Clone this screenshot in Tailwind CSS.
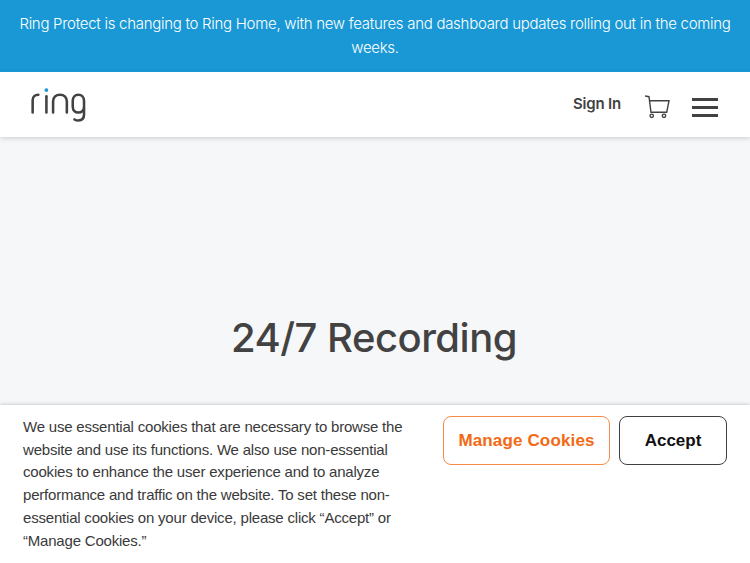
<!DOCTYPE html>
<html><head><meta charset="utf-8"><script src="https://cdn.jsdelivr.net/npm/@tailwindcss/browser@4"></script></head>
<body class="relative w-[750px] h-[563px] overflow-hidden bg-[#f6f7f9] font-['Inter',sans-serif]">
<div class="bg-[#1998d5] border-b border-b-[#1aa0e0] h-[72px] px-[15px] pt-[12px] text-center text-white text-[15px] font-light tracking-[-0.28px] leading-[24px]">Ring Protect is changing to Ring Home, with new features and dashboard updates rolling out in the coming weeks.</div>
<header class="bg-white h-[65px] flex items-center pl-[30px] pr-[32px] shadow-[0_1px_5px_rgba(0,0,0,0.18)] relative">
<svg width="56" height="36" viewBox="0 0 57 36" class="mt-[3px]" fill="none" stroke="#424242" stroke-width="2.6" stroke-linecap="round">
<path d="M2.700 24.700V12C2.700 8.500 5 6.500 8.500 6.500"/><path d="M16.700 8V24.700"/><circle cx="16.700" cy="1.800" r="1.900" fill="#1998d5" stroke="none"/><path d="M23.500 24.700V13.500C23.500 9 26.500 6.500 30.500 6.500S37.500 9 37.500 13.500V24.700"/><path d="M55 13C55 9 52.500 6.500 49.200 6.500S43.500 9 43.500 13V18.500C43.500 22.500 46 24.700 49.200 24.700S55 22.500 55 18.500ZM55 18V26.500C55 30.500 52.800 32.800 49.200 32.800C47.500 32.800 46.300 32.400 45.300 31.700"/>
</svg>
<div class="ml-auto flex items-center">
<span class="text-[15px] font-semibold tracking-[-0.2px] text-[#424242] mr-[24px] -mt-[1px]">Sign In</span>
<svg width="26" height="24" viewBox="0 0 26 24" class="mr-[21px] mt-[5px]" fill="none" stroke="#424242" stroke-width="1.400"><path d="M0 1L4 1.700L6 17.300H21.700L24 5.700H4.500"/><circle cx="6.700" cy="20.800" r="1.700"/><circle cx="19" cy="20.800" r="1.700"/></svg>
<div class="w-[26px] flex flex-col gap-[5px] mt-[5px]"><div class="h-[3px] bg-[#424242]"></div><div class="h-[3px] bg-[#424242]"></div><div class="h-[3px] bg-[#424242]"></div></div>
</div>
</header>
<main class="text-center pt-[173px] pr-[2px]"><h1 class="text-[40px] leading-[56px] font-medium tracking-[-0.5px] text-[#424242]">24/7 Recording</h1></main>
<div class="absolute left-0 right-0 bottom-0 h-[158px] bg-white shadow-[0_0_4px_rgba(0,0,0,0.25)] flex pl-[23px] pt-[11px] font-['Liberation_Sans',sans-serif]">
<p class="w-[385px] text-[15px] tracking-[-0.2px] leading-[22.700px] text-[#3a3a3a]">We use essential cookies that are necessary to browse the website and use its functions. We also use non-essential cookies to enhance the user experience and to analyze performance and traffic on the website. To set these non-essential cookies on your device, please click “Accept” or “Manage Cookies.”</p>
<div class="flex gap-[9px] ml-[35px] items-start">
<button class="w-[167px] h-[49px] rounded-[8px] border border-[#f58c4b] text-[#f26a14] font-bold text-[17px] tracking-[0.15px]">Manage Cookies</button>
<button class="w-[108px] h-[49px] rounded-[8px] border border-[#3d4043] text-[#111] font-bold text-[17px]">Accept</button>
</div></div>
</body></html>
